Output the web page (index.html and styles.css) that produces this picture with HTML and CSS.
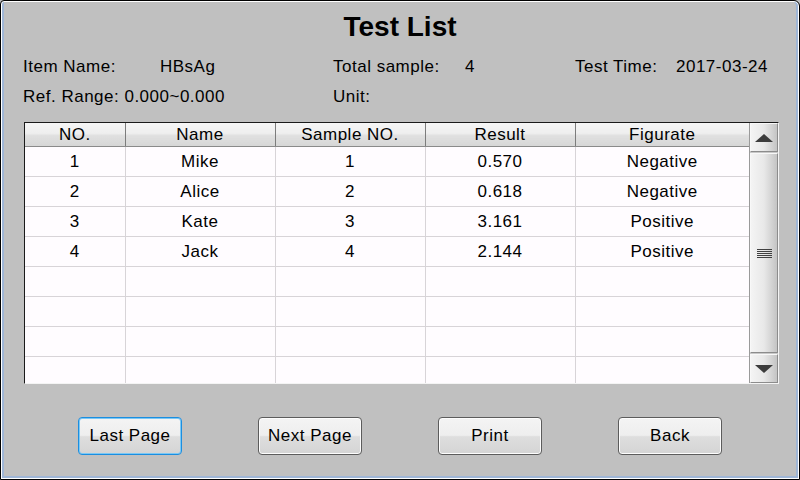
FILE: index.html
```html
<!DOCTYPE html>
<html lang="en">
<head>
    <meta charset="UTF-8">
    <meta name="viewport" content="width=device-width, initial-scale=1.0">
    <title>Test List</title>
    <link rel="stylesheet" href="styles.css">
</head>
<body>
    <div class="screen">
        <h1 class="title">Test List</h1>

        <div class="info">
            <span>Item Name:</span>
            <span>HBsAg</span>
            <span>Total sample:</span>
            <span>4</span>
            <span>Test Time:</span>
            <span>2017-03-24</span>
            <span class="span2">Ref. Range: 0.000~0.000</span>
            <span>Unit:</span>
        </div>

        <div class="list-box">
            <div class="list-view">
                <table>
                    <colgroup>
                        <col class="c-no">
                        <col class="c-mid">
                        <col class="c-mid">
                        <col class="c-mid">
                        <col class="c-last">
                    </colgroup>
                    <thead>
                        <tr>
                            <th>NO.</th>
                            <th>Name</th>
                            <th>Sample NO.</th>
                            <th>Result</th>
                            <th>Figurate</th>
                        </tr>
                    </thead>
                    <tbody>
                        <tr><td>1</td><td>Mike</td><td>1</td><td>0.570</td><td>Negative</td></tr>
                        <tr><td>2</td><td>Alice</td><td>2</td><td>0.618</td><td>Negative</td></tr>
                        <tr><td>3</td><td>Kate</td><td>3</td><td>3.161</td><td>Positive</td></tr>
                        <tr><td>4</td><td>Jack</td><td>4</td><td>2.144</td><td>Positive</td></tr>
                        <tr><td></td><td></td><td></td><td></td><td></td></tr>
                        <tr><td></td><td></td><td></td><td></td><td></td></tr>
                        <tr><td></td><td></td><td></td><td></td><td></td></tr>
                        <tr><td></td><td></td><td></td><td></td><td></td></tr>
                    </tbody>
                </table>
            </div>
            <div class="scrollbar">
                <div class="sb-btn"><span class="arrow-up"></span></div>
                <div class="sb-thumb">
                    <svg width="15" height="9" viewBox="0 0 15 9">
                        <path d="M0 0.5H15M0 2.5H15M0 4.5H15M0 6.5H15M0 8.5H15" stroke="#404040" stroke-width="1"/>
                    </svg>
                </div>
                <div class="sb-btn"><span class="arrow-down"></span></div>
            </div>
        </div>

        <div class="buttons">
            <button class="btn focused">Last Page</button>
            <button class="btn">Next Page</button>
            <button class="btn">Print</button>
            <button class="btn">Back</button>
        </div>
    </div>
</body>
</html>
```

FILE: styles.css
```css
html, body {
    margin: 0;
    padding: 0;
}
body {
    font-family: "Liberation Sans", Arial, sans-serif;
    background-color: #c0c0c0;
}
.screen {
    width: 800px;
    height: 480px;
    box-sizing: border-box;
    border: 1px solid #000;
    border-radius: 4px 6px 0 0;
    background-color: #c0c0c0;
    box-shadow: inset 0 0 0 1px #fff, inset 3px -3px 0 #9fb6d6, inset -3px 0 0 #9fb6d6;
    display: flex;
    flex-direction: column;
}
.title {
    margin: 0;
    padding-top: 1px;
    font-size: 28px;
    font-weight: bold;
    line-height: 50px;
    text-align: center;
    color: #000;
}
.info {
    display: grid;
    grid-template-columns: 137px 173px 132px 110px 101px auto;
    padding-left: 22px;
    font-size: 17px;
    letter-spacing: 0.5px;
    line-height: 30px;
    color: #000;
}
.span2 {
    grid-column: span 2;
}
.list-box {
    margin: 10px 0 0 23px;
    width: 755px;
    height: 262px;
    box-sizing: border-box;
    border: 1px solid;
    border-color: #1a1a1a #f4f4f4 #f4f4f4 #1a1a1a;
    display: flex;
    background-color: #fffcff;
}
.list-view {
    flex: 1;
    overflow: hidden;
}
table {
    width: 724px;
    table-layout: fixed;
    border-collapse: collapse;
    font-size: 17px;
    letter-spacing: 0.5px;
}
.c-no {
    width: 100px;
}
.c-mid {
    width: 150px;
}
.c-last {
    width: 174px;
}
th {
    height: 23px;
    padding: 0;
    font-weight: normal;
    border-right: 1px solid #7c7c7c;
    border-bottom: 1px solid #8a8a8a;
    background: linear-gradient(#f6f6f6, #eeeeee 45%, #e0e0e0 55%, #d6d6d6);
}
th:last-child {
    border-right: none;
}
td {
    height: 29px;
    padding: 0;
    text-align: center;
    border-right: 1px solid #d8d4d8;
    border-bottom: 1px solid #d8d4d8;
}
td:last-child {
    border-right: none;
}
.scrollbar {
    width: 29px;
    display: flex;
    flex-direction: column;
    border-left: 1px solid #9a9a9a;
    box-sizing: border-box;
    background-color: #c8c8c8;
}
.sb-btn, .sb-thumb {
    box-sizing: border-box;
    border: 1px solid #8c8c8c;
    border-top-color: #f8f8f8;
    border-left-color: #f8f8f8;
    background: linear-gradient(to right, #f4f4f4, #e8e8e8 50%, #c4c4c4);
    display: flex;
    align-items: center;
    justify-content: center;
}
.sb-btn {
    height: 29px;
}
.sb-thumb {
    flex: 1;
    margin: 1px 0;
}
.arrow-up {
    width: 0;
    height: 0;
    border-left: 9px solid transparent;
    border-right: 9px solid transparent;
    border-bottom: 8px solid #3c3c3c;
}
.arrow-down {
    width: 0;
    height: 0;
    border-left: 9px solid transparent;
    border-right: 9px solid transparent;
    border-top: 8px solid #3c3c3c;
}
.buttons {
    display: flex;
    gap: 76px;
    padding-left: 77px;
    margin-top: 33px;
}
.btn {
    width: 104px;
    height: 38px;
    padding: 0;
    font-family: "Liberation Sans", Arial, sans-serif;
    font-size: 17px;
    letter-spacing: 0.5px;
    color: #000;
    border: 1px solid #5c5c5c;
    border-radius: 4px;
    background: linear-gradient(#f4f4f4, #eeeeee 48%, #dedede 52%, #d4d4d4);
    box-shadow: inset 0 0 0 1px #fdfdfd;
}
.btn.focused {
    border-color: #1b8ee0;
    box-shadow: inset 0 0 0 1px #7cc8f4;
}
```
